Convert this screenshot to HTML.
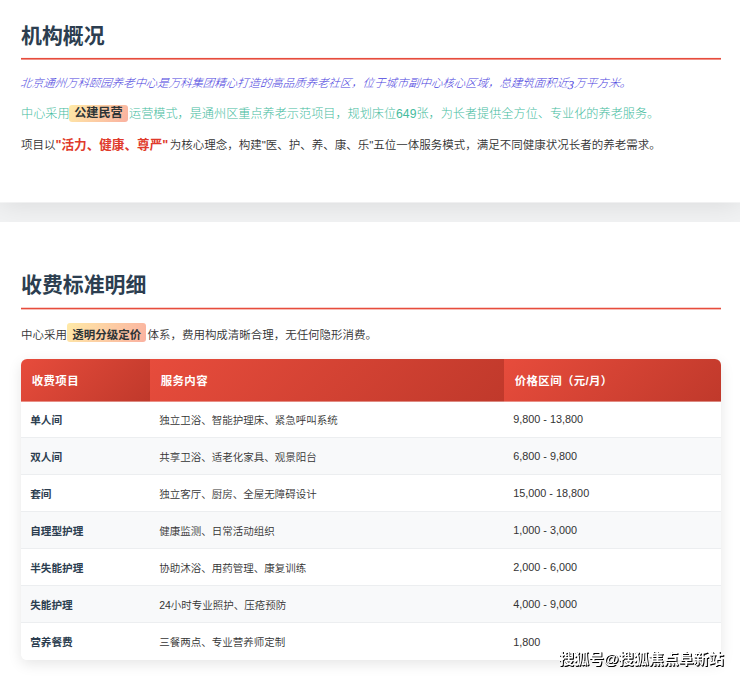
<!DOCTYPE html>
<html lang="zh-CN">
<head>
<meta charset="utf-8">
<title>机构概况</title>
<style>
html,body{margin:0;padding:0;}
body{width:740px;height:676px;overflow:hidden;position:relative;background:#fff;
  font-family:"Liberation Sans","Noto Sans CJK SC",sans-serif;color:#333;font-weight:350;}
.abs{position:absolute;white-space:nowrap;}
.band{position:absolute;left:0;top:195px;width:740px;height:35px;background:#f1f2f3;z-index:0;}
.card{position:absolute;left:0;width:740px;background:#fff;}
.c1{top:0;height:202px;z-index:1;box-shadow:0 2px 26px rgba(0,0,0,0.1);}
.c2{top:222px;height:454px;z-index:2;}
.c1::after{content:"";position:absolute;left:0;top:202px;width:740px;height:1px;background:rgba(255,255,255,.45);}
h2{position:absolute;margin:0;left:21px;font-size:20.9px;line-height:26px;font-weight:700;color:#2c3e50;white-space:nowrap;}
.rule{position:absolute;left:21px;width:700px;}
.p{position:absolute;left:21px;white-space:nowrap;font-size:11.5px;line-height:20px;margin:0;}
.hl{display:inline-block;background:linear-gradient(120deg,#ffeaa7 0%,#fab1a0 100%);border-radius:3px;
  padding:0 5px;margin:0 1.3px 0 -0.4px;position:relative;top:-1px;font-weight:700;color:#2d3436;line-height:17px;}
.os{font-family:"Liberation Serif",serif;font-size:12px;line-height:1;position:relative;top:1.6px;font-weight:400;margin:0 0.2px;}
.red{color:#e03a2b;font-weight:700;font-size:12.6px;margin-right:1.5px;}
table{position:absolute;left:21px;top:137px;width:700px;border-collapse:separate;border-spacing:0;
  font-size:10.5px;border-radius:6px;overflow:hidden;box-shadow:0 4px 14px rgba(0,0,0,0.1);table-layout:fixed;}
th{height:42px;padding:0 0 0 10.8px;letter-spacing:0.35px;text-align:left;color:#fff;font-size:11.45px;font-weight:700;
  background:linear-gradient(135deg,#e74c3c 0%,#c0392b 100%);}
td{height:36px;padding:0 0 0 9.2px;color:#333;border-bottom:1px solid #eceef0;}
tr:last-child td{border-bottom:none;height:37px;}
td:last-child{font-size:10.85px;}
td:first-child{font-weight:700;color:#2c3e50;font-size:10.65px;}
tr:nth-child(even) td{background:#f8f9fa;}
tr:nth-child(odd) td{background:#fff;}
tbody tr:first-child td{background:#fff linear-gradient(90deg,rgba(222,70,55,.6),rgba(192,57,43,.6)) no-repeat;background-size:100% 1px;}
.wm{position:absolute;left:558.5px;top:648px;font-size:15px;line-height:22px;color:#fff;font-weight:700;
  text-shadow:1px 1px 0 #000,0.5px 0.5px 0 #000;will-change:transform;white-space:nowrap;z-index:5;}
</style>
</head>
<body>
<div class="band"></div>
<section class="card c1">
<h2 style="top:23px">机构概况</h2>
<div class="rule" style="top:57px;height:3px;background:linear-gradient(to bottom,#fdf1f0 0,#fdf1f0 1px,#e74c3c 1px,#e74c3c 2px,#ef9188 2px,#ef9188 3px)"></div>
<p class="p" style="top:73px;left:20.4px;font-size:11.42px;font-style:italic;color:#4b42de;font-weight:300;transform:skewX(-6deg);transform-origin:0 75%;">北京通州万科颐园养老中心是万科集团精心打造的高品质养老社区，位于城市副中心核心区域，总建筑面积近<span class="os">3</span>万平方米。</p>
<p class="p" style="top:103.5px;font-size:12.15px;color:#45bc9e;font-weight:300;">中心采用<span class="hl">公建民营</span>运营模式，是通州区重点养老示范项目，规划床位649张，为长者提供全方位、专业化的养老服务。</p>
<p class="p" style="top:135px;font-size:11.51px;">项目以<span class="red">"活力、健康、尊严"</span>为核心理念，构建"医、护、养、康、乐"五位一体服务模式，满足不同健康状况长者的养老需求。</p>
</section>

<section class="card c2">
<h2 style="top:49.6px">收费标准明细</h2>
<div class="rule" style="top:85px;height:3px;background:linear-gradient(to bottom,#f9d0cc 0,#f9d0cc 1px,#e74c3c 1px,#e74c3c 2px,#f6bdb7 2px,#f6bdb7 3px)"></div>
<p class="p" style="top:102px;font-size:11.47px;">中心采用<span class="hl" style="line-height:15px;padding:4px 5.1px 0;margin:0 1.3px 0 0.4px;top:-1.4px"><span style="position:relative;top:0.9px">透明分级定价</span></span>体系，费用构成清晰合理，无任何隐形消费。</p>

<table>
<colgroup><col style="width:129px"><col style="width:354px"><col style="width:217px"></colgroup>
<thead><tr><th>收费项目</th><th>服务内容</th><th>价格区间（元/月）</th></tr></thead>
<tbody>
<tr><td>单人间</td><td>独立卫浴、智能护理床、紧急呼叫系统</td><td>9,800 - 13,800</td></tr>
<tr><td>双人间</td><td>共享卫浴、适老化家具、观景阳台</td><td>6,800 - 9,800</td></tr>
<tr><td>套间</td><td>独立客厅、厨房、全屋无障碍设计</td><td>15,000 - 18,800</td></tr>
<tr><td>自理型护理</td><td>健康监测、日常活动组织</td><td>1,000 - 3,000</td></tr>
<tr><td>半失能护理</td><td>协助沐浴、用药管理、康复训练</td><td>2,000 - 6,000</td></tr>
<tr><td>失能护理</td><td>24小时专业照护、压疮预防</td><td>4,000 - 9,000</td></tr>
<tr><td>营养餐费</td><td>三餐两点、专业营养师定制</td><td>1,800</td></tr>
</tbody>
</table>
</section>

<div class="wm">搜狐号@搜狐焦点阜新站</div>
</body>
</html>
